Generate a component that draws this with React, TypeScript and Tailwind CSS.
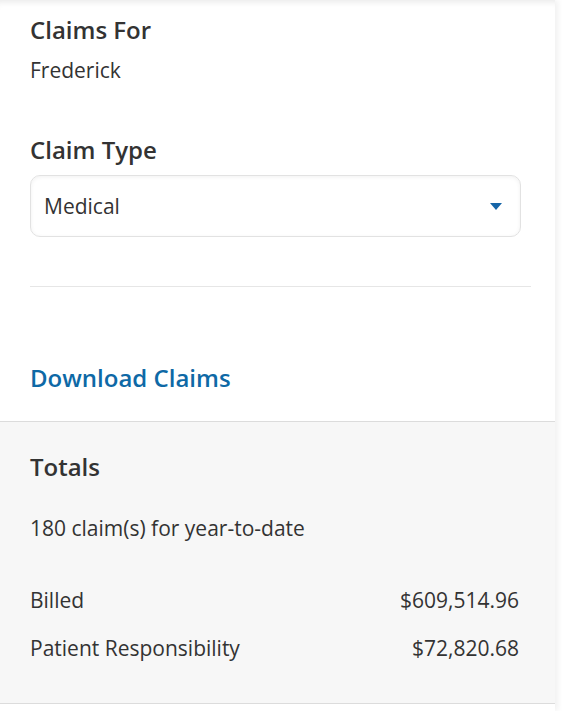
export default function App() {
  return (
    <div className="min-h-[711px] bg-white font-['Open_Sans',sans-serif] text-[#333333]">
      <div className="w-[555px] min-h-[711px] bg-white shadow-[3px_0_6px_rgba(0,0,0,0.06)]">
        {/* Filters */}
        <div className="px-[30px] pt-[14px] pb-[27px] shadow-[inset_0_7px_6px_-5px_rgba(0,0,0,0.09)]">
          <h2 className="text-[24px] leading-[32px] font-semibold">Claims For</h2>
          <p className="mt-[10px] text-[21px] leading-[28px]">Frederick</p>

          <h2 className="mt-[50px] text-[24px] leading-[32px] font-semibold">Claim Type</h2>
          <div className="mt-[9px] w-[491px] h-[62px] flex items-center justify-between pl-[13px] pr-[18px] rounded-[10px] border border-[#e2e2e2] bg-white shadow-[inset_0_1px_4px_rgba(0,0,0,0.06)]">
            <span className="text-[21px] leading-[28px]">Medical</span>
            <svg width="12" height="7" viewBox="0 0 12 7">
              <path d="M0 0h12L6 7z" fill="#1565a8" />
            </svg>
          </div>

          <div className="mt-[49px] w-[501px] border-t border-[#e6e6e6]" />

          <a className="block mt-[75px] text-[24px] leading-[32px] font-semibold text-[#0e69a6]">
            Download Claims
          </a>
        </div>

        {/* Totals */}
        <div className="border-y border-[#dcdcdc] bg-[#f7f7f7] pl-[30px] pr-[36px] pt-[29px] pb-[41px]">
          <h2 className="text-[24px] leading-[32px] font-semibold">Totals</h2>
          <p className="mt-[31px] text-[21px] leading-[28px]">180 claim(s) for year-to-date</p>
          <div className="mt-[44px] flex justify-between text-[21px] leading-[28px]">
            <span>Billed</span>
            <span>$609,514.96</span>
          </div>
          <div className="mt-[20px] flex justify-between text-[21px] leading-[28px]">
            <span>Patient Responsibility</span>
            <span>$72,820.68</span>
          </div>
        </div>
      </div>
    </div>
  );
}
